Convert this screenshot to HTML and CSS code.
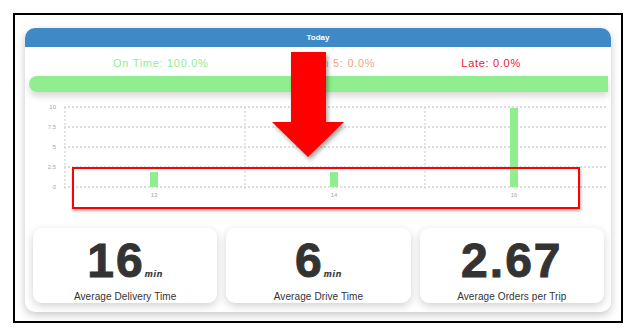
FILE: index.html
```html
<!DOCTYPE html>
<html>
<head>
<meta charset="utf-8">
<link rel="stylesheet" href="styles.css">
</head>
<body>
<div class="frame">
  <div class="panel">
    <div class="panel-head">Today</div>
    <div class="stats">
      <span class="stat ontime">On Time: 100.0%</span>
      <span class="stat within">Within 5: 0.0%</span>
      <span class="stat late">Late: 0.0%</span>
    </div>
    <div class="bar-track"><div class="bar-fill" style="width:100%"></div></div>
    <svg class="chart" width="586" height="126" viewBox="0 0 586 126">
      <g class="grid">
        <line x1="39" y1="15" x2="582" y2="15"/>
        <line x1="39" y1="35" x2="582" y2="35"/>
        <line x1="39" y1="55" x2="582" y2="55"/>
        <line x1="39" y1="75" x2="582" y2="75"/>
        <line x1="39" y1="95" x2="582" y2="95"/>
        <line x1="40" y1="15" x2="40" y2="97"/>
        <line x1="220" y1="15" x2="220" y2="97"/>
        <line x1="400" y1="15" x2="400" y2="97"/>
      </g>
      <g class="ylab">
        <text x="31" y="17">10</text>
        <text x="31" y="37">7.5</text>
        <text x="31" y="57">5</text>
        <text x="31" y="77">2.5</text>
        <text x="31" y="97">0</text>
      </g>
      <g class="bars">
        <rect x="125" y="80" width="8" height="15"/>
        <rect x="305" y="80" width="8" height="15"/>
        <rect x="485" y="16" width="8" height="79"/>
      </g>
      <g class="xlab">
        <text x="129" y="105">13</text>
        <text x="309" y="105">14</text>
        <text x="489" y="105">16</text>
      </g>
    </svg>
    <div class="metrics">
      <div class="metric">
        <div class="value">16<span class="unit">min</span></div>
        <div class="label">Average Delivery Time</div>
      </div>
      <div class="metric">
        <div class="value">6<span class="unit">min</span></div>
        <div class="label">Average Drive Time</div>
      </div>
      <div class="metric">
        <div class="value">2.67</div>
        <div class="label">Average Orders per Trip</div>
      </div>
    </div>
  </div>
  <div class="highlight"></div>
  <svg class="arrow" width="90" height="120" viewBox="0 0 90 120">
    <polygon points="23,4 58,4 58,74 76,74 40,109 4,74 23,74"/>
  </svg>
</div>
</body>
</html>
```

FILE: styles.css
```css
* { box-sizing: border-box; }
html, body { margin: 0; padding: 0; background: #fff; }
body { font-family: "Liberation Sans", Arial, sans-serif; }

.frame {
  position: relative;
  margin: 13px 0 0 13px;
  width: 610px;
  height: 310px;
  border: 2px solid #000;
  padding: 13px 10px 0 10px;
}

.panel {
  width: 586px;
  height: 284px;
  background: #fff;
  border-radius: 10px;
  box-shadow: 0 3px 8px rgba(0, 0, 0, 0.22);
  overflow: hidden;
}

.panel-head {
  height: 19px;
  line-height: 19px;
  background: #3f89c7;
  color: #fff;
  font-size: 8px;
  font-weight: bold;
  text-align: center;
}

.stats {
  display: flex;
  justify-content: space-evenly;
  padding: 10px 4px 0 2px;
  height: 23px;
  line-height: 13px;
  font-size: 11px;
  letter-spacing: 0.7px;
}
.ontime { color: #90ee90; }
.within { color: #ffa07a; }
.late { color: #f0143c; }

.bar-track {
  margin: 6px 3px 0 4px;
  height: 16px;
  border-radius: 8px 0 0 8px;
  box-shadow: 0 4px 7px rgba(0, 0, 0, 0.16);
}
.bar-fill {
  height: 16px;
  background: #90ee90;
  border-radius: 8px 0 0 8px;
}

.chart { display: block; }
.grid line {
  stroke: #d4d4d4;
  stroke-width: 1.3;
  stroke-dasharray: 2 2;
}
.ylab text, .xlab text {
  font-family: "Liberation Sans", Arial, sans-serif;
  font-size: 6px;
  fill: #a8a8a8;
}
.ylab text { text-anchor: end; }
.xlab text { text-anchor: middle; }
.bars rect { fill: #90ee90; }

.metrics {
  display: grid;
  grid-template-columns: 1fr 1fr 1fr;
  gap: 9px;
  padding: 10px 7px 0 8px;
}
.metric {
  height: 75px;
  background: #fff;
  border-radius: 9px;
  box-shadow: 0 3px 8px rgba(0, 0, 0, 0.18);
  padding-top: 9px;
  text-align: center;
  color: #333;
}
.value {
  font-size: 48px;
  font-weight: bold;
  line-height: 48px;
  height: 48px;
  letter-spacing: 2px;
  -webkit-text-stroke: 1px #333;
}
.unit {
  font-size: 9px;
  font-style: italic;
  letter-spacing: 0.8px;
  -webkit-text-stroke: 0.2px #333;
}
.label {
  margin-top: 6px;
  font-size: 10px;
  line-height: 12px;
  letter-spacing: 0.1px;
}

.highlight {
  position: absolute;
  left: 57px;
  top: 152px;
  width: 508px;
  height: 42px;
  border: 2px solid #ff0000;
  box-shadow: 1px 2px 3px rgba(0, 0, 0, 0.3);
}

.arrow {
  position: absolute;
  left: 253px;
  top: 33px;
  filter: drop-shadow(2px 3px 2px rgba(0, 0, 0, 0.35));
}
.arrow polygon { fill: #ff0000; }
```
